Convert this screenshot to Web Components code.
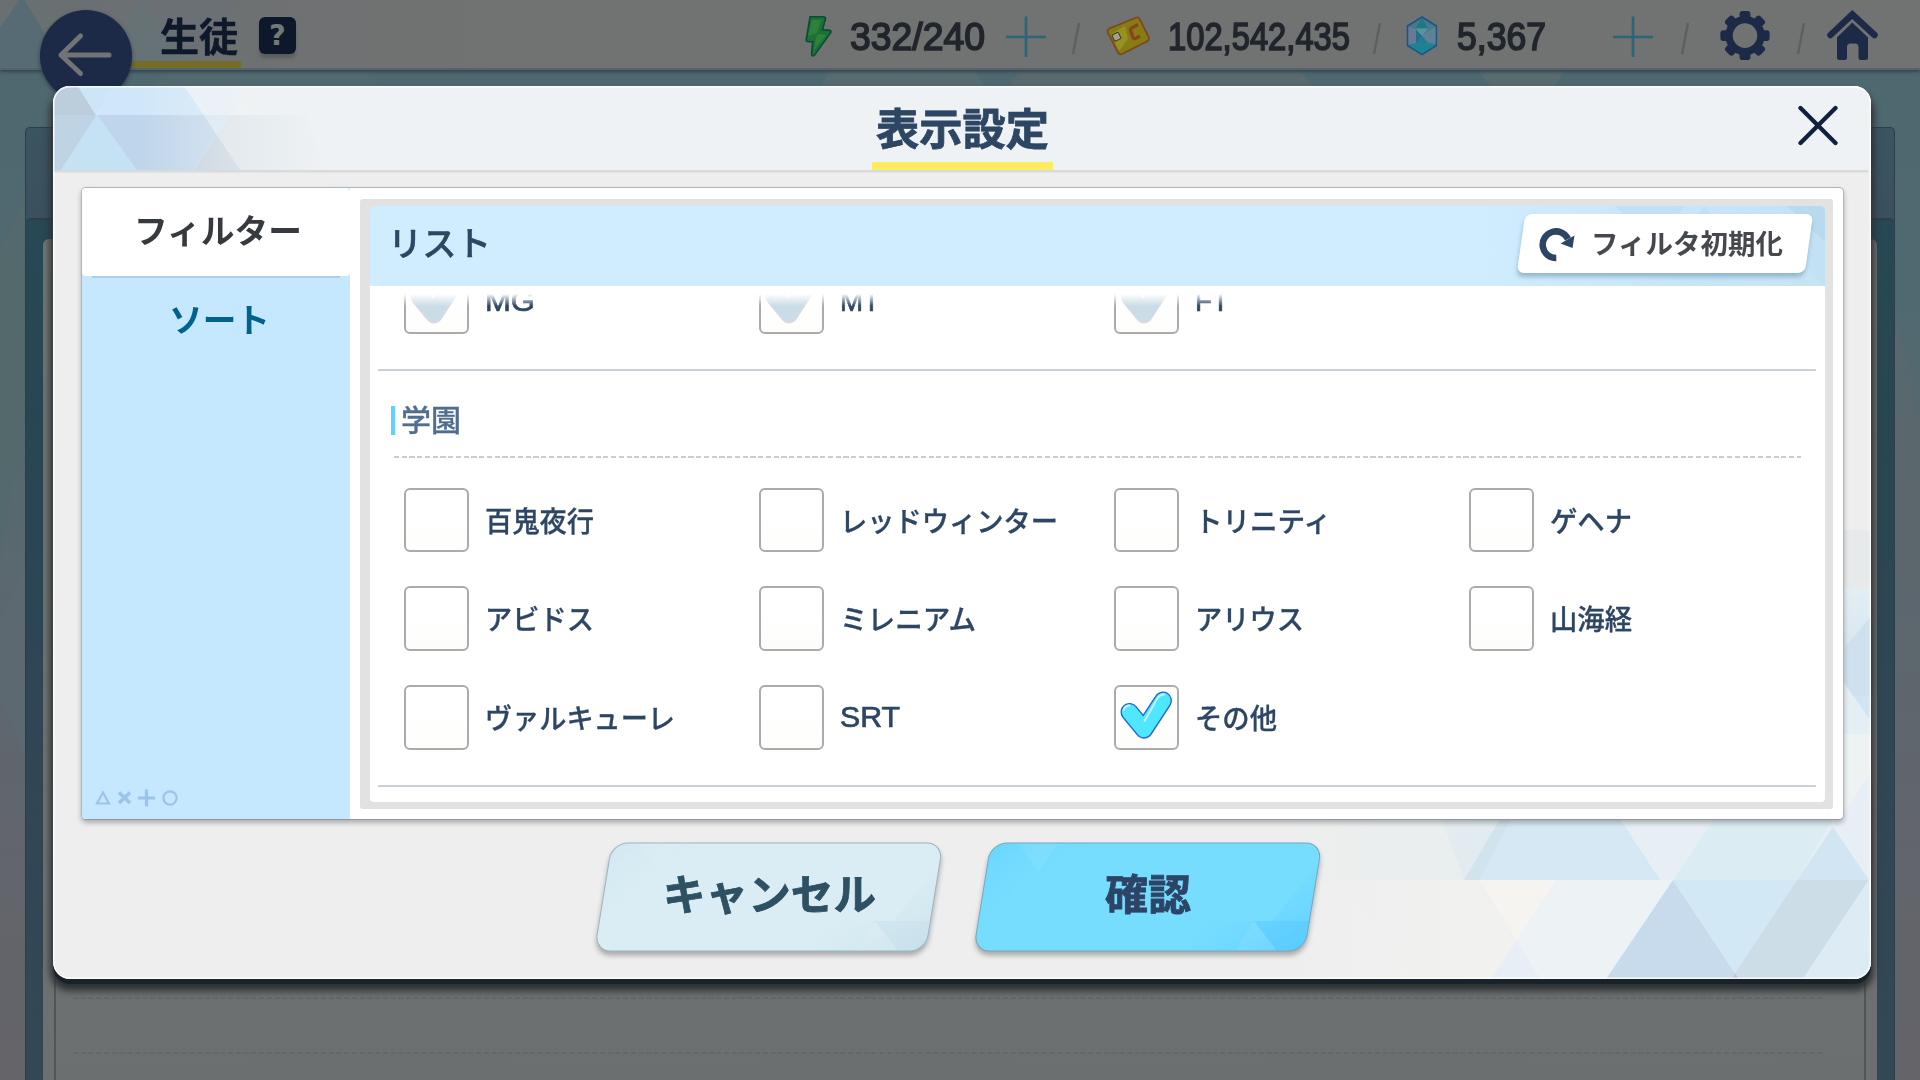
<!DOCTYPE html>
<html lang="ja">
<head>
<meta charset="utf-8">
<title>生徒</title>
<style>
	html, body {
		margin: 0;
		width: 1920px;
		height: 1080px;
		overflow: hidden;
		background: #58676e;
		font-family: "Noto Sans CJK JP", "Liberation Sans", sans-serif;
		--navy: #2d4663;
	}
</style>
</head>
<body>
<game-screen>
	<top-bar slot="bar"></top-bar>
	<settings-dialog slot="dialog" caption="表示設定">
		<side-tabs slot="tabs"></side-tabs>
		<list-panel slot="list">
			<check-grid>
				<check-item w="50" state="dim">MG</check-item>
				<check-item w="40" state="dim">MT</check-item>
				<check-item w="34" state="dim">FT</check-item>
			</check-grid>
			<list-divider></list-divider>
			<section-title>学園</section-title>
			<check-grid>
				<check-item w="109">百鬼夜行</check-item>
				<check-item w="218">レッドウィンター</check-item>
				<check-item w="136">トリニティ</check-item>
				<check-item w="82">ゲヘナ</check-item>
				<check-item w="109">アビドス</check-item>
				<check-item w="136">ミレニアム</check-item>
				<check-item w="109">アリウス</check-item>
				<check-item w="82">山海経</check-item>
				<check-item w="190">ヴァルキューレ</check-item>
				<check-item w="60">SRT</check-item>
				<check-item w="82" state="on">その他</check-item>
			</check-grid>
			<list-divider></list-divider>
		</list-panel>
		<slant-button slot="actions" w="213" kind="cancel">キャンセル</slant-button>
		<slant-button slot="actions" w="86" kind="ok">確認</slant-button>
	</settings-dialog>
</game-screen>

<script>
class Base extends HTMLElement {
	constructor(){
		super();
		this.attachShadow({mode: 'open'});
	}
	connectedCallback() {
		this.shadowRoot.innerHTML = `<style>${this.css()}</style>${this.html()}`;
	}
	css(){ return ''; }
	html(){ return '<slot></slot>'; }
}

class GameScreen extends Base {
	css(){
		return `
		:host { display: grid; width: 1920px; height: 1080px; overflow: hidden; }
		.back, .front { grid-area: 1 / 1; min-width: 0; min-height: 0; }
		.back { display: flex; flex-direction: column; position: relative; isolation: isolate;
			background: linear-gradient(180deg, #4e6870 0, #506970 300px, #5a686f 560px, #61656c 800px, #646469 1080px); }
		.deco { position: absolute; left: 0; top: 0; }
		.room { margin: 57px 25px 0; flex: 1; box-sizing: border-box; position: relative;
			border: 1px solid #2c3e49; border-bottom: 0; border-radius: 5px 5px 0 0;
			background: linear-gradient(180deg, #3b5461, #3b505e 90px); padding-top: 90px; display: flex; }
		.inner { flex: 1; border-top: 2px solid #2a3f4c; border-radius: 5px 5px 0 0; padding: 19px 17px 0;
			background: linear-gradient(180deg, #274854, #294652 260px, #304654 480px, #324855); display: flex; }
		.paper { flex: 1; border-radius: 6px 6px 0 0; background: linear-gradient(180deg, #727374, #6e7172 700px, #6b6f70); padding: 0 11px; display: flex; }
		.sheet { flex: 1; border: solid #4b5856; border-width: 0 2px; padding: 758px 42px 0 17px; }
		.dash { height: 2px; margin-bottom: 53px;
			background: repeating-linear-gradient(90deg, #646869 0 5px, transparent 5px 7.75px); }
		.front { position: relative; padding: 86px 0 0 53px; }
		`;
	}
	html(){
		return `
		<div class="back">
			<svg class="deco" width="1920" height="1080">
				<polygon points="0,250 28,190 28,400 0,560" fill="#53696c"/>
				<polygon points="0,620 28,560 28,760 0,700" fill="#5d6970"/>
				<polygon points="1892,300 1920,420 1920,640 1892,560" fill="#5d686d" opacity=".6"/>
				<polygon points="170,70 360,70 380,86 150,86" fill="#52696f"/>
				<polygon points="830,70 975,70 985,86 822,86" fill="#586b70"/>
				<polygon points="1020,70 1300,70 1312,86 1010,86" fill="#586a6e"/>
				<polygon points="1478,70 1565,70 1555,86 1490,86" fill="#586b6e"/>
			</svg>
			<slot name="bar"></slot>
			<div class="room"><div class="inner"><div class="paper"><div class="sheet">
				<div class="dash"></div><div class="dash"></div>
			</div></div></div></div>
		</div>
		<div class="front"><slot name="dialog"></slot></div>`;
	}
}

class TopBar extends Base {
	css(){
		return `
		:host { display: flex; height: 70px; box-sizing: border-box; position: relative; z-index: 1;
			border-bottom: 2px solid #53646b; box-shadow: 0 2px 3px #34464f;
			background: linear-gradient(90deg, #687072 0, #6e7172 240px, #717272 500px, #717272); }
		.deco { position: absolute; left: 0; top: 0; }
		.back-btn { margin: 10px 0 -34px 40px; width: 92px; height: 92px; border-radius: 50%; flex: none;
			background: #1c2a47; box-shadow: 0 2px 4px #26363fcc; position: relative; z-index: 1; }
		.head { height: 61px; width: 110px; margin-left: -1px; border-bottom: 7px solid #756c27; flex: none; position: relative;
			box-sizing: content-box; display: flex; justify-content: flex-end; }
		.head fit-text { font: 700 39px/39px "Noto Sans CJK JP", sans-serif; color: #0d192a; margin: 15px 3px 0 0; -webkit-text-stroke: .5px #0d192a; }
		.help { margin: 17px 0 0 18px; width: 37px; height: 37px; border-radius: 6px; background: #0d192a; flex: none; position: relative;
			color: #747879; font: 900 29px/37px "DejaVu Sans", sans-serif; text-align: center; box-shadow: 0 4px 3px #5a5d5e; }
		.money { display: flex; margin-left: 509px; position: relative; }
		.money svg, .money fit-text { flex: none; }
		.money fit-text { font: 400 39px/44px "Liberation Sans", sans-serif; color: #20262c; margin-top: 15px; -webkit-text-stroke: 1.700px #20262c; }
		`;
	}
	slash(gap){
		return `<svg width="10" height="60" style="margin-left:${gap}px"><path d="M8 23 2 54" stroke="#5d6061" stroke-width="2.4"/></svg>`;
	}
	plus(gap){
		return `<svg width="42" height="60" style="margin-left:${gap}px"><path d="M1 37H41M21 16.500V57" stroke="#2d6478" stroke-width="2.700"/></svg>`;
	}
	html(){
		return `
		<svg class="deco" width="560" height="68">
			<polygon points="0,28 22,-4 66,68 0,68" fill="#566b73"/>
			<polygon points="110,68 138,0 200,68" fill="#657378" opacity=".7"/>
			<polygon points="138,0 240,0 186,60" fill="#6a7174" opacity=".8"/>
		</svg>
		<div class="back-btn"><svg width="92" height="92">
			<path d="M69 45H21M40.500 26 21 45 40.500 63.500" fill="none" stroke="#717374" stroke-width="5" stroke-linecap="round" stroke-linejoin="round"/>
		</svg></div>
		<div class="head"><fit-text w="78">生徒</fit-text></div>
		<div class="help">?</div>
		<div class="money">
			<svg width="27" height="60" viewBox="805 0 27 60">
				<path d="M810 16.800h13q3 0 2.500 2l-3 11 6.500.3q3 .4 1.400 3l-15.500 21.500q-3.200 3.200-3.300-.8l1-12h-4q-3 0-2.200-3z" fill="#1b7137" stroke="#0a4b37" stroke-width="1.600"/>
				<path d="M812 20h9l-4 13-9 3zM818 34l8 1-12 15 2-12z" fill="#34853b" opacity=".8"/>
			</svg>
			<fit-text w="135" style="margin-left:18px">332/240</fit-text>
			${this.plus(20)}
			${this.slash(24)}
			<svg width="45" height="60" viewBox="1106 0 45 60" style="margin-left:25px">
				<path d="M1109.500 28.500 1136 17.700q2.500-.9 3.700 1.500l9 18q.9 2.600-1.400 4L1122 54q-2.600 1-3.900-1.500L1107.700 32.300q-.8-2.500 1.800-3.800z" fill="#857c16" stroke="#7b481b" stroke-width="1.700"/>
				<path d="M1111 34l14-8 3 13-9 12z" fill="#989120"/>
				<rect x="1113" y="33.500" width="7" height="7" rx="1" transform="rotate(-25 1116 37)" fill="#a3a18c" stroke="#3c3a25"/>
				<path d="M1138 24.500 1131.500 28q-1.500 1-1 2.500l2.500 7q1 1.800 3 .8l4-2.300" fill="none" stroke="#8c421b" stroke-width="3.200"/>
			</svg>
			<fit-text w="182" style="margin-left:17px">102,542,435</fit-text>
			${this.slash(22)}
			<svg width="32" height="60" viewBox="1406 0 32 60" style="margin-left:24px">
				<path d="M1422 17 1436.300 26V45.500L1422 54.500 1407.500 45.500V26z" fill="#46798c" stroke="#1b5583" stroke-width="1.600"/>
				<path d="M1422 18 1428 28.500H1415.500z" fill="#1f7883"/>
				<path d="M1408.500 27 1416 29 1417 43 1408.500 45z" fill="#6f7a98" opacity=".8"/>
				<path d="M1435.500 27 1428 31 1427 42 1435.500 44z" fill="#5c8294"/>
				<path d="M1415.500 28.500H1428L1422 36z" fill="#5a94a2"/>
				<path d="M1416 30V43L1422 36z" fill="#236f8a"/><path d="M1428 31V43L1422 36z" fill="#5d8399"/>
				<path d="M1416 43H1428L1422 36z" fill="#2b7791"/>
				<path d="M1409 45 1416 43H1428L1435 45 1422 53.500z" fill="#1c8295"/>
			</svg>
			<fit-text w="89" style="margin-left:19px">5,367</fit-text>
			${this.plus(66)}
			${this.slash(26)}
			<svg width="50" height="60" viewBox="-25 -35.600 50 60" style="margin-left:30px">
				<g fill="#1c2a47">
					<circle r="16" fill="none" stroke="#1c2a47" stroke-width="7.400"/>
					${[0,45,90,135,180,225,270,315].map(a => `<rect x="-5.400" y="-24.600" width="10.800" height="9" rx="3" transform="rotate(${a})"/>`).join('')}
				</g>
			</svg>
			${this.slash(26)}
			<svg width="54" height="62" viewBox="1826 0 54 62" style="margin-left:20px">
				<path d="M1830.500 35 1852.300 14.500 1874.500 35" fill="none" stroke="#1c2a47" stroke-width="6.500" stroke-linecap="round"/>
				<path d="M1852.300 22.500 1868 37.500V57.500q0 2.500-2.500 2.500H1860.500q-2 0-2-2.500V47q0-3.500-3.500-3.500h-4.500q-3.500 0-3.500 3.500V57.500q0 2.500-2.500 2.500H1839.500q-2.500 0-2.500-2.500V37.500z" fill="#1c2a47"/>
			</svg>
		</div>`;
	}
}

class SettingsDialog extends Base {
	css(){
		return `
		:host { display: flex; flex-direction: column; position: relative; width: 1818px; height: 893px; box-sizing: border-box;
			border-radius: 17px; background: #eeeeee; overflow: visible;
			box-shadow: 0 5px 0 #17222b, 0 9px 7px 3px #2e3133; }
		.deco { position: absolute; left: 0; top: 0; border-radius: 17px; }
		.edge { position: absolute; inset: 0; border-radius: 17px; box-shadow: inset 0 0 0 1.500px #fffffbd0; }
		header { position: relative; height: 86px; display: grid; grid-template-columns: 1fr auto 1fr; }
		.cap { height: 76px; border-bottom: 8px solid #fdec60; padding: 0 4px; grid-column: 2; }
		.cap fit-text { font: 700 43.500px/43.500px "Noto Sans CJK JP", sans-serif; color: var(--navy); margin-top: 19px; -webkit-text-stroke: .8px var(--navy); }
		.close { justify-self: end; margin: 19px 32px 0 0; }
		main { position: relative; display: flex; margin: 15px 27px 0 28px; height: 631px; width: 1761px;
			background: #fff; border: 1px solid #aab8c4; border-bottom-color: #8e97a3; border-radius: 5px; box-sizing: content-box; box-shadow: 0 3px 5px #00000045; }
		footer { position: relative; display: flex; gap: 35px; padding: 23px 0 0 544px; }
		`;
	}
	html(){
		return `
		<svg class="deco" width="1818" height="893" viewBox="53 86 1818 893">
			<defs>
				<linearGradient id="h"><stop offset="0" stop-color="#eef2f5" stop-opacity="0"/><stop offset=".85" stop-color="#eef2f5"/></linearGradient>
				<linearGradient id="f"><stop offset="0" stop-color="#eee"/><stop offset="1" stop-color="#eee" stop-opacity="0"/></linearGradient>
				<linearGradient id="v" x2="0" y2="1"><stop offset="0" stop-color="#e3eef3"/><stop offset="1" stop-color="#cfe1ed"/></linearGradient>
			</defs>
			<rect x="53" y="86" width="1818" height="85" fill="#eef2f5"/>
			<polygon points="54,86 78,86 96,115 54,115" fill="#bccddc"/>
			<polygon points="78,86 115,86 96,115" fill="#cce5f7"/>
			<polygon points="115,86 184,86 204,115 96,115" fill="#d0e7f9"/>
			<polygon points="184,86 250,86 230,115 204,115" fill="#e9f1f8"/>
			<polygon points="54,115 97,115 60,172 54,172" fill="#bed3e3"/>
			<polygon points="97,115 138,172 60,172" fill="#c5e1f4"/>
			<polygon points="97,115 204,115 217,135 193,172 138,172" fill="#bfd5eb"/>
			<polygon points="204,115 230,115 217,135" fill="#d7e8f4"/>
			<polygon points="217,135 242,172 193,172" fill="#c4cfdb"/>
			<polygon points="217,135 230,115 305,115 325,172 242,172" fill="#dbe2e7"/>
			<polygon points="250,86 325,86 305,115 230,115" fill="#f0f3f3"/>
			<rect x="140" y="86" width="220" height="86" fill="url(#h)"/>
			<rect x="55" y="170" width="1813" height="2.500" fill="#d8dbdc"/>

			<rect x="1300" y="810" width="571" height="70" fill="#e7eff4"/>
			<rect x="1300" y="880" width="571" height="99" fill="#f2f2f1"/>
			<polygon points="1310,819 1441,819 1469,880 1310,880" fill="#e8eeef"/>
			<polygon points="1441,819 1508,819 1472,880 1465,880" fill="#e1ebf0"/>
			<polygon points="1508,819 1620,819 1660,880 1465,880" fill="#d6e8f3"/>
			<polygon points="1500,819 1511,819 1479,880 1464,880" fill="#d1e3ec"/>
			<polygon points="1714,819 1833,819 1797,880 1673,880" fill="#dbedf3"/>
			<polygon points="1833,827 1869,880 1797,880" fill="#d2e5f2"/>
			<polygon points="1335,880 1480,880 1517,942 1500,979 1415,979 1406,962" fill="#f1f1f0"/>
			<polygon points="1480,880 1556,880 1517,940" fill="#f5f4f1"/>
			<polygon points="1556,880 1673,880 1606,979 1540,979 1517,940" fill="#edf3f5"/>
			<polygon points="1517,940 1540,979 1491,979" fill="#e7eef6"/>
			<polygon points="1673,880 1735,973 1731,979 1606,979" fill="#c8dbed"/>
			<polygon points="1673,880 1797,880 1735,973" fill="#d3e8f5"/>
			<polygon points="1797,880 1869,880 1803,979 1739,979 1735,973" fill="#ccdde8"/>
			<polygon points="1869,880 1871,979 1803,979" fill="#dcebf4"/>
			<polygon points="1735,973 1739,979 1731,979" fill="#bcc8d2"/>
			<rect x="1280" y="810" width="200" height="169" fill="url(#f)"/>

			<rect x="1843" y="530" width="28" height="58" fill="#e6eaeb"/>
			<rect x="1843" y="588" width="28" height="108" fill="url(#v)"/>
			<polygon points="1843,650 1871,616 1871,696 1850,696 1843,684" fill="#cfe1ee"/>
			<rect x="1843" y="696" width="28" height="38" fill="#e4eef5"/>
			<polygon points="1843,681 1851,696 1871,696 1871,721" fill="#cfe5f4"/>
			<polygon points="1843,681 1871,723 1871,734 1843,734" fill="#e4eef5"/>
			<rect x="1843" y="734" width="28" height="76" fill="#edf3f3"/>
			<polygon points="1843,815 1871,772 1871,870 1843,830" fill="#e7eef5"/>
		</svg>
		<div class="edge"></div>
		<header>
			<div class="cap"><fit-text w="173">${this.getAttribute('caption')}</fit-text></div>
			<svg class="close" width="42" height="42"><path d="M3.500 3 38.500 38M38.500 3 3.500 38" stroke="#10213f" stroke-width="4.300" stroke-linecap="round"/></svg>
		</header>
		<main><slot name="tabs"></slot><slot name="list"></slot></main>
		<footer><slot name="actions"></slot></footer>`;
	}
}

class SideTabs extends Base {
	css(){
		return `
		:host { display: flex; flex-direction: column; width: 268px; flex: none; background: #c5e8ff; border-radius: 4px 0 0 4px; }
		div { display: flex; justify-content: center; }
		fit-text { font: 700 33.500px/40px "Noto Sans CJK JP", sans-serif; }
		.on { height: 88px; background: #fff; color: #36393d; border-radius: 4px; }
		.on fit-text { margin: 21px 0 0 4px; }
		.line { height: 2px; background: #b0cfe3; margin: 0 10px; }
		.off { color: #00628d; flex: 1; }
		.off fit-text { margin: 20px 0 0 6px; }
		.marks { margin: 0 0 11px 13px; }
		`;
	}
	html(){
		return `
		<div class="on"><fit-text w="168">フィルター</fit-text></div>
		<div class="line"></div>
		<div class="off"><fit-text w="101">ソート</fit-text></div>
		<svg class="marks" width="86" height="20" fill="none" stroke="#9cc3ea">
			<path d="M8 4.500 14 15.500H2z" stroke-width="2.200"/>
			<path d="M24 4.500 35 15M35 4.500 24 15" stroke-width="3.600"/>
			<path d="M43 10H60M51.500 1.500V18.500" stroke-width="3.200"/>
			<circle cx="75" cy="10" r="6.600" stroke-width="2.200"/>
		</svg>`;
	}
}

class ListPanel extends Base {
	css(){
		return `
		:host { display: flex; flex-direction: column; width: 1473px; height: 610px; margin: 11px 0 0 10px; box-sizing: border-box;
			border: solid #e2e2e2; border-width: 7px 8px 7px 10px; border-radius: 3px; background: #e2e2e2; }
		.bar { display: flex; justify-content: space-between; height: 80px; flex: none; position: relative; border-radius: 5px 5px 0 0; overflow: hidden;
			background: linear-gradient(90deg, #d0ecff 0, #d0ecff 1100px, #c3e1f5 1456px); }
		.bar > fit-text { font: 500 34px/40px "Noto Sans CJK JP", sans-serif; color: var(--navy); margin: 16px 0 0 18px; -webkit-text-stroke: .5px var(--navy); }
		.deco { position: absolute; right: 0; top: 0; }
		.reset { position: relative; display: flex; width: 296px; height: 59px; margin: 8px 12px 0 0; }
		.reset::before { content: ''; position: absolute; inset: 0 4px; background: #fff; border-radius: 7px; transform: skewX(-8deg); box-shadow: 0 4px 4px #7ca2bbb0; }
		.reset svg { position: relative; margin: 11px 0 0 20px; }
		.reset fit-text { position: relative; font: 700 27px/34px "Noto Sans CJK JP", sans-serif; color: #45484c; margin: 12px 0 0 16px; }
		.list { flex: 1; min-height: 0; overflow: hidden; display: flex; flex-direction: column; background: #fff; border-radius: 0 0 4px 4px; }
		.fade { display: flex; flex-direction: column;
			-webkit-mask-image: linear-gradient(180deg, transparent 8px, #000 20px); mask-image: linear-gradient(180deg, transparent 8px, #000 20px); }
		::slotted(check-grid:first-child) { margin-top: -17px; }
		`;
	}
	html(){
		return `
		<div class="bar">
			<svg class="deco" width="300" height="81">
				<polygon points="90,0 160,0 128,40" fill="#b9daf0" opacity=".5"/>
				<polygon points="180,0 215,50 140,50" fill="#bcdcf2" opacity=".5"/>
				<polygon points="262,0 300,0 300,36" fill="#aed3ea" opacity=".5"/>
				<polygon points="200,81 245,20 300,81" fill="#c9e6f9" opacity=".6"/>
			</svg>
			<fit-text w="103">リスト</fit-text>
			<div class="reset">
				<svg width="38" height="38">
					<path d="M19.300 32.500A13.300 13.300 0 1 1 31 13.500" fill="none" stroke="#2d4565" stroke-width="6.500" transform="translate(0 .5)"/>
					<path d="M23.500 18.500 37.500 10.500 35.500 23z" fill="#2d4565"/>
				</svg>
				<fit-text w="192">フィルタ初期化</fit-text>
			</div>
		</div>
		<div class="list"><div class="fade"><slot></slot></div></div>`;
	}
}

class ListDivider extends Base {
	css(){
		return `:host { display: block; height: 2px; flex: none; margin: 35px 9px 0 8px; background: #cad0d6; }`;
	}
	html(){ return ''; }
}

class SectionTitle extends Base {
	css(){
		return `
		:host { display: block; flex: none; margin: 35px 24px 30px 21px; }
		div { display: flex; height: 29px; }
		i { width: 4px; background: #5fd3fe; margin-right: 6px; }
		span { font: 500 30px/29px "Noto Sans CJK JP", sans-serif; color: #506e91; margin-top: -2px; -webkit-text-stroke: .3px #506e91; }
		hr { border: 0; height: 2px; margin: 21px 0 0 3px; background: repeating-linear-gradient(90deg, #ccc 0 5px, transparent 5px 7.750px); }
		`;
	}
	html(){
		return `<div><i></i><span><slot></slot></span></div><hr>`;
	}
}

class CheckGrid extends Base {
	css(){
		return `:host { display: grid; flex: none; grid-template-columns: repeat(4, 355px); row-gap: 34px; padding-left: 34px; }`;
	}
}

class CheckItem extends Base {
	css(){
		return `
		:host { display: flex; align-items: center; height: 64.700px; }
		.box { width: 65px; height: 64.700px; box-sizing: border-box; border: 2px solid #ababab; border-radius: 6px; flex: none;
			background: linear-gradient(180deg, #fff 45%, #fdfdfb); }
		svg { display: block; margin: -2px; }
		fit-text { font: 500 28px/36px "Noto Sans CJK JP", sans-serif; color: var(--navy); margin-left: 16px; margin-top: -1px; -webkit-text-stroke: .3px var(--navy); }
		fit-text.latin { font: 400 29px/36px "Liberation Sans", sans-serif; -webkit-text-stroke: .7px var(--navy); margin-top: 0; }
		`;
	}
	html(){
		const state = this.getAttribute('state');
		const c = state === 'on' ? ['#1b62d8', '#4fe6ff', '#c9faff'] : ['#d3d9ea', '#cadde6', 'none'];
		const latin = /^[A-Z]+$/.test(this.textContent) ? 'latin' : '';
		// two stacked strokes give the outlined tick
		const d = 'M15.500 27 30 44.500 49 15.500';
		const tick = state ? `<svg width="65" height="65" fill="none" stroke-linecap="round" stroke-linejoin="round">
			<path d="${d}" stroke="#0002" stroke-width="17" transform="translate(0 1.500)"/>
			<path d="${d}" stroke="${c[0]}" stroke-width="18"/>
			<path d="${d}" stroke="${c[1]}" stroke-width="15.400"/>
			<path d="M9.500 25q1.500-4.500 6-4.500M30.500 36 43 14q2.500-4.500 7-4.500" stroke="${c[2]}" stroke-width="1.800"/>
		</svg>` : '';
		return `<div class="box">${tick}</div><fit-text class="${latin}" w="${this.getAttribute('w')}">${this.textContent}</fit-text>`;
	}
}

class SlantButton extends Base {
	css(){
		return `
		:host { display: grid; place-items: center; width: 344px; height: 108px; }
		svg, fit-text { grid-area: 1 / 1; }
		svg { overflow: visible; filter: drop-shadow(0 4px 2.500px #00000048); }
		fit-text { position: relative; font: 700 42.500px/50px "Noto Sans CJK JP", sans-serif; margin-top: -10px; color: var(--ink); -webkit-text-stroke: .8px var(--ink); }
		:host([kind=cancel]) { --ink: #2d5063; }
		:host([kind=ok]) { --ink: #2c4567; }
		`;
	}
	html(){
		const c = this.getAttribute('kind') === 'ok'
			? ['#77ddff', '#63d2ff', '#55c8ff', '#77a8be']
			: ['#daedf4', '#cde5ef', '#c6deea', '#9db4c0'];
		return `
		<svg width="344" height="108">
			<defs>
				<clipPath id="c"><rect x="15" width="331" height="108" rx="16" transform="skewX(-9.200)"/></clipPath>
				<linearGradient id="l" x2=".6" y2=".4"><stop offset="0" stop-color="${c[1]}"/><stop offset="1" stop-color="${c[0]}" stop-opacity="0"/></linearGradient>
				<linearGradient id="r" x1="1" y1="1" x2=".4" y2=".3"><stop offset="0" stop-color="${c[2]}"/><stop offset="1" stop-color="${c[0]}" stop-opacity="0"/></linearGradient>
			</defs>
			<g clip-path="url(#c)">
				<rect x="-5" width="354" height="108" fill="${c[0]}"/>
				<path d="M-5 0H150L120 29H50L15 80H-5z" fill="url(#l)"/>
				<path d="M42 0H82L62 29z" fill="#fff" opacity=".07"/>
				<path d="M349 10 333 32 296 78H215V108H349z" fill="url(#r)"/>
				<path d="M278 78 301 108H259z" fill="#fff" opacity=".08"/>
				<path d="M278 78H349V108H301z" fill="${c[2]}" opacity=".4"/>
			</g>
			<rect x="15" width="331" height="108" rx="16" transform="skewX(-9.200)" fill="none" stroke="${c[3]}"/>
		</svg>
		<fit-text w="${this.getAttribute('w')}">${this.textContent}</fit-text>`;
	}
}

// scales its text horizontally to the given advance width
class FitText extends Base {
	css(){
		return `
		:host { display: block; width: ${this.getAttribute('w')}px; white-space: nowrap; }
		span { display: inline-block; transform-origin: 0 50%; }
		`;
	}
	html(){ return '<span><slot></slot></span>'; }
	connectedCallback() {
		super.connectedCallback();
		const span = this.shadowRoot.querySelector('span');
		const real = span.getBoundingClientRect().width;
		if (real)
			span.style.transform = `scaleX(${this.getAttribute('w') / real})`;
	}
}

const tags = {
	'game-screen': GameScreen,
	'top-bar': TopBar,
	'settings-dialog': SettingsDialog,
	'side-tabs': SideTabs,
	'list-panel': ListPanel,
	'list-divider': ListDivider,
	'section-title': SectionTitle,
	'check-grid': CheckGrid,
	'check-item': CheckItem,
	'slant-button': SlantButton,
	'fit-text': FitText
};
for (const name in tags) {
	if (!customElements.get(name))
		customElements.define(name, tags[name]);
}
</script>
</body>
</html>
